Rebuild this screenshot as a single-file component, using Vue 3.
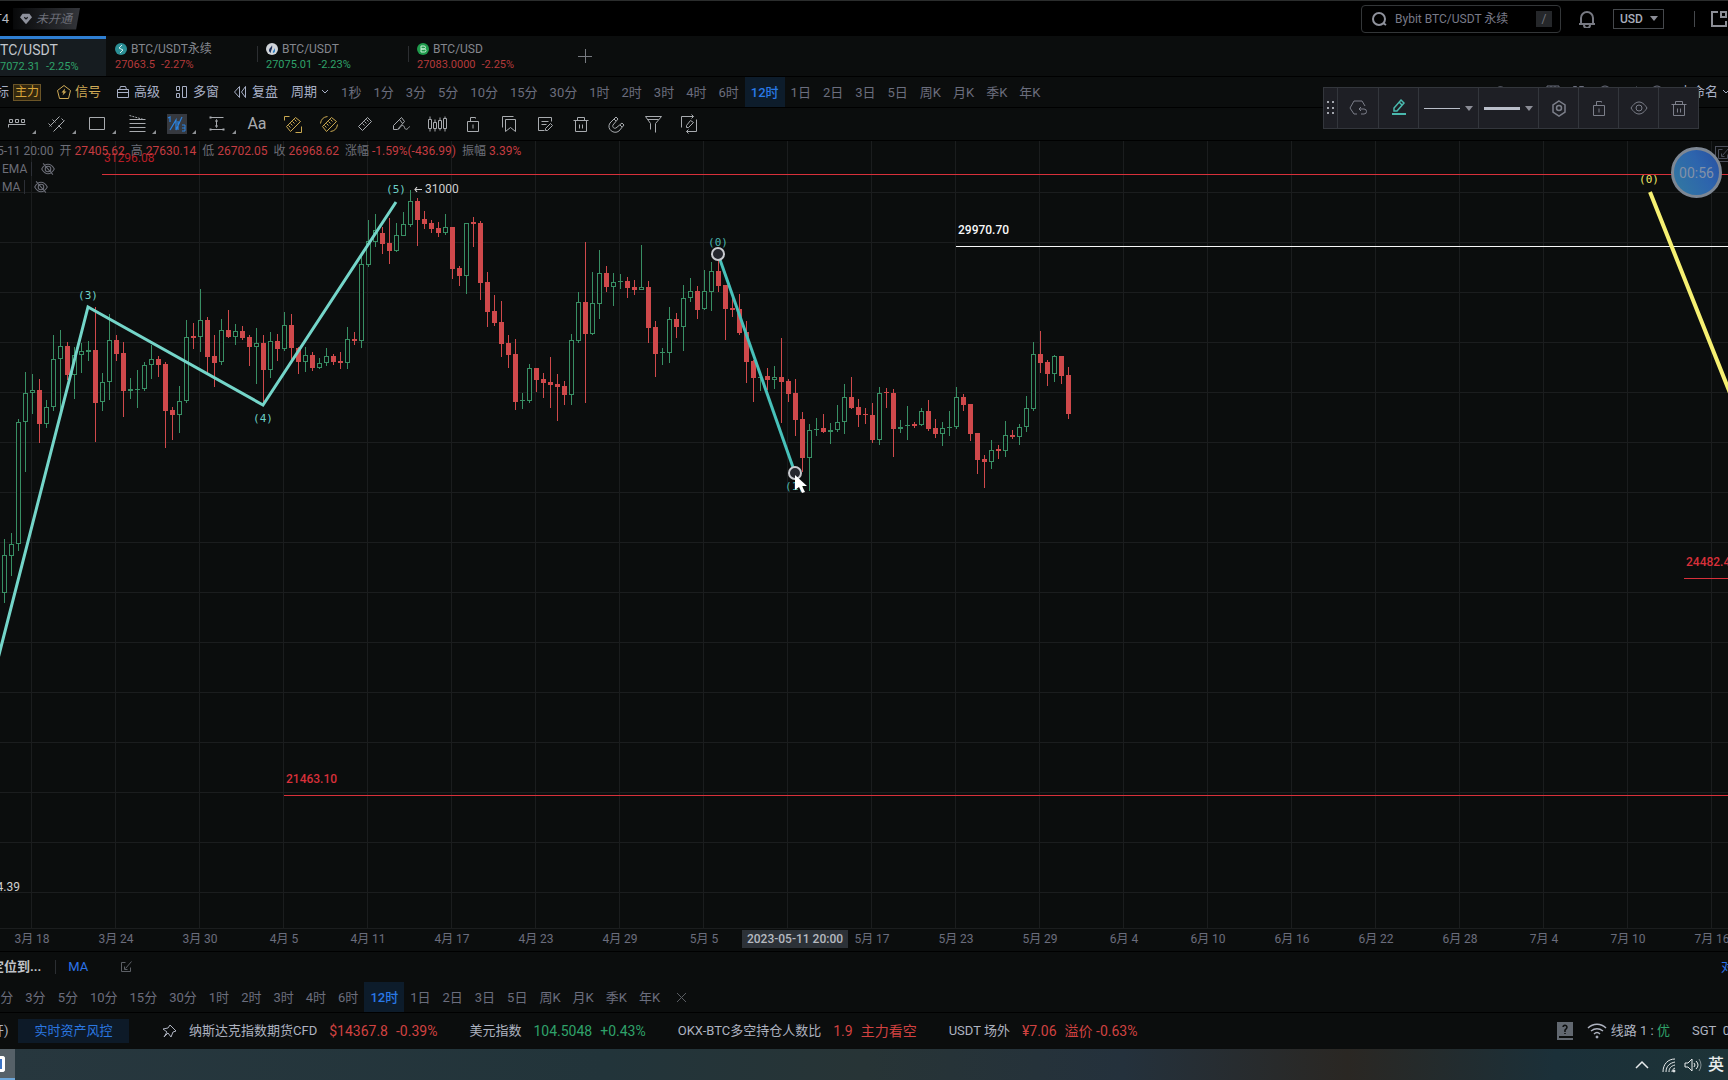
<script setup>
import { ref } from 'vue'

const intervals = ['1分', '3分', '5分', '10分', '15分', '30分', '1时', '2时', '3时', '4时', '6时', '12时', '1日', '2日', '3日', '5日', '周K', '月K', '季K', '年K']
const active = ref('12时')
const search = ref('')
const currency = ref('USD')

const tabs = [
  { icon: 'bybit', name: 'BTC/USDT永续', price: '27063.5', change: '-2.27%', dir: 'down' },
  { icon: 'htx', name: 'BTC/USDT', price: '27075.01', change: '-2.23%', dir: 'up' },
  { icon: 'bitstamp', name: 'BTC/USD', price: '27083.0000', change: '-2.25%', dir: 'down' },
]

const menu = [
  { icon: 'signal', text: '信号', gold: true },
  { icon: 'advanced', text: '高级' },
  { icon: 'windows', text: '多窗' },
  { icon: 'replay', text: '复盘' },
]

const shapeTools = ['range', 'lines', 'rect', 'fib', 'wave', 'measure']
const editTools = ['text', 'ruler-plus', 'ruler-minus', 'ruler', 'pen', 'candles', 'lock', 'bookmark', 'note', 'trash', 'magnet', 'filter', 'sync']

const ohlc = [
  ['开', '27405.62'],
  ['高', '27630.14'],
  ['低', '26702.05'],
  ['收', '26968.62'],
  ['涨幅', '-1.59%(-436.99)'],
  ['振幅', '3.39%'],
]

const dates = ['3月 18', '3月 24', '3月 30', '4月 5', '4月 11', '4月 17', '4月 23', '4月 29', '5月 5', '', '5月 17', '5月 23', '5月 29', '6月 4', '6月 10', '6月 16', '6月 22', '6月 28', '7月 4', '7月 10', '7月 16']

const quotes = [
  { label: '纳斯达克指数期货CFD', values: ['$14367.8', '-0.39%'], dir: 'down' },
  { label: '美元指数', values: ['104.5048', '+0.43%'], dir: 'up' },
  { label: 'OKX-BTC多空持仓人数比', values: ['1.9', '主力看空'], dir: 'down' },
  { label: 'USDT 场外', values: ['¥7.06', '溢价 -0.63%'], dir: 'down' },
]

const columns = Array.from({ length: 32 }, (_, i) => 31 + 84 * i)
const rows = Array.from({ length: 15 }, (_, i) => 192 + 50 * i)

// one entry per 12-hour bar: direction, high, body top, body bottom, low
const bars = `
g 539 555 593 603|g 533 544 556 576|g 419 422 544 551|g 372 393 422 472|g 374 390 393 414|r 379 390 424 443
g 400 407 424 428|g 335 359 407 411|g 330 346 359 410|r 342 346 375 380|g 347 355 375 399|g 343 351 355 373
g 341 350 352 361|r 307 350 403 442|g 373 382 402 411|g 314 340 382 400|r 335 340 354 361|r 342 353 391 417
g 378 389 391 399|g 370 389 390 408|g 362 365 389 391|g 345 359 365 379|r 356 359 365 377|r 362 364 411 448
r 407 410 415 440|g 386 401 415 433|g 320 337 401 403|r 323 336 338 349|g 289 320 337 352|r 317 320 357 373
r 335 356 363 387|g 319 330 362 365|r 310 330 337 338|g 324 331 337 345|r 326 331 338 340|r 335 337 347 366
g 328 343 347 384|r 335 343 370 405|g 332 341 370 378|r 334 341 349 361|g 312 325 349 351|r 314 325 348 360
r 347 348 362 374|g 347 355 362 372|r 352 355 368 371|g 358 363 368 369|g 348 356 363 366|r 354 356 362 365
r 352 361 363 369|g 327 339 363 369|r 332 339 341 345|g 253 264 341 348|g 220 241 265 267|g 214 230 242 247
r 227 233 244 254|r 218 243 251 264|g 223 235 251 252|g 212 224 236 236|g 190 201 225 227|r 198 201 220 246
r 211 219 224 229|r 220 223 229 233|r 222 228 233 237|g 214 227 233 235|r 227 227 269 279|r 266 268 276 286
g 223 223 276 294|r 217 222 224 247|r 221 223 283 300|r 272 282 312 327|r 295 311 323 326|r 301 322 344 357
r 335 343 355 368|r 339 354 402 410|g 393 400 401 409|g 364 368 401 403|r 368 368 380 392|r 373 379 383 398
r 357 382 385 408|r 374 384 387 421|r 381 386 395 405|g 334 340 395 405|g 292 302 341 343|r 242 302 334 403
g 272 303 334 335|g 250 273 304 319|r 266 273 287 292|g 273 282 287 306|g 274 281 282 289|r 277 281 288 298
r 280 287 290 295|g 245 287 290 290|r 281 287 328 343|r 321 327 354 377|g 348 352 353 365|g 307 319 353 363
r 313 319 327 338|g 285 298 327 351|g 278 291 298 302|r 286 291 310 319|g 270 291 309 310|g 262 271 292 311
r 260 271 286 292|r 285 285 309 340|r 298 308 310 317|r 294 309 333 335|r 321 332 362 383|r 360 361 378 402
g 373 377 378 391|r 368 376 380 390|g 366 377 380 389|r 338 377 382 423|r 379 381 394 402|r 379 393 420 436
r 412 419 458 472|g 424 430 458 491|g 418 429 430 436|r 414 428 432 433|g 423 430 432 444|g 405 422 430 432
g 384 397 422 434|r 377 397 408 409|r 399 407 415 427|r 408 414 415 424|r 403 415 440 443|g 387 393 440 445
r 388 392 393 408|r 389 393 429 457|g 420 427 429 433|g 406 425 426 440|r 422 424 426 428|g 408 411 425 426
r 400 411 429 431|r 419 428 434 438|g 422 428 434 446|g 411 427 428 436|g 387 397 427 429|r 394 397 405 411
r 404 404 434 441|r 433 433 460 474|r 455 459 462 488|g 440 450 462 469|r 445 449 451 459|g 421 435 451 457
r 430 435 437 439|g 424 427 437 445|g 396 408 427 432|g 342 354 409 411|r 331 354 363 373|r 360 362 374 386
g 355 356 374 382|r 356 356 376 384|r 367 375 414 419`

const candles = bars.trim().split(/[|\n]/).map((bar, i) => {
  const [side, ...levels] = bar.split(' ')
  const [high, top, bottom, low] = levels.map(Number)
  return { x: 2 + 7 * i, up: side === 'g', high, top, low, height: Math.max(1, bottom - top) }
})
</script>

<template>
  <svg class="sprite" aria-hidden="true">
    <symbol id="gem" viewBox="0 0 14 14"><path d="M3 1h8l3 4-7 8-7-8z" fill="currentColor"/><path d="M5 5l2 2 2-2" fill="none" stroke="#15171a" stroke-width="1.4"/></symbol>
    <symbol id="search" viewBox="0 0 16 16"><circle cx="8" cy="8" r="6"/><path d="M12 12l3 2"/></symbol>
    <symbol id="bell" viewBox="0 0 18 18"><path d="M1 14h16M3 14V8a6 6 0 0 1 12 0v6M6 15a3 3 0 0 0 6 0"/></symbol>
    <symbol id="layout" viewBox="0 0 18 18"><path d="M8 2H2v14h14v-5M11 2h5v5h-5z"/></symbol>
    <symbol id="bybit" viewBox="0 0 12 12"><circle cx="6" cy="6" r="6" fill="#2b8f95" stroke="none"/><path d="M7 2L4 5l4 2-3 3" stroke="#d5eeee"/></symbol>
    <symbol id="htx" viewBox="0 0 12 12"><circle cx="6" cy="6" r="6" fill="#cfd3d8" stroke="none"/><path d="M6 2c0 2-3 3-3 5.500 0 1 1 2 2 2.500C4 8 7 6 6 2z" fill="#1d2c55" stroke="none"/><path d="M8 5c1 2-2 3-1 5 2 0 3-3 1-5z" fill="#2b7fc4" stroke="none"/></symbol>
    <symbol id="bitstamp" viewBox="0 0 12 12"><circle cx="6" cy="6" r="6" fill="#1f9a4c" stroke="none"/><path d="M4 3h3a1 1 0 0 1 0 3H4zM4 6h3.500a1 1 0 0 1 0 3H4z" stroke="#c9f0d6"/></symbol>
    <symbol id="signal" viewBox="-.5 -.5 14 14"><path d="M6.500 0L13 5l-2 8H2L0 5z"/><path d="M7.500 3L4 7h2l-1 3 4-4H7z" fill="currentColor" stroke="none"/></symbol>
    <symbol id="advanced" viewBox="-.5 -.5 14 14"><path d="M3 4l1-3h5l1 3M1 4h11v8H1zM1 7h11"/></symbol>
    <symbol id="windows" viewBox="-.5 -.5 14 14"><path d="M1 1h3v4H1zM1 8h3v4H1zM7 1h4v11H7z"/></symbol>
    <symbol id="replay" viewBox="-.5 -.5 14 14"><path d="M5 1v11L0 6.500zM11 1v11L7 6.500z"/></symbol>
    <symbol id="chevron" viewBox="0 0 8 8"><path d="M1 2l3 3 3-3"/></symbol>
    <symbol id="range" viewBox="-.5 -.5 20 20"><path d="M1 13v-3h17M2 5h3v3H2zM8 5h3v3H8zM14 5h3v3h-3zM1 10v2"/></symbol>
    <symbol id="lines" viewBox="-.5 -.5 20 20"><path d="M2 12L12 2M6 17L17 6M5 5l3 3M11 11l3 3M1 9l3 3M14 4l2 2"/></symbol>
    <symbol id="rect" viewBox="-.5 -.5 20 20"><path d="M2 3h15v12H2z"/></symbol>
    <symbol id="fib" viewBox="-.5 -.5 20 20"><path d="M2 5h16M2 9h16M2 13h16M2 17h16"/><path d="M2 1l14 4" stroke-dasharray="2 1"/></symbol>
    <symbol id="wave" viewBox="0 0 20 20"><path d="M1 4l2-1v5M3 16L9 6v10l6-13M11 7v9" stroke-width="1.200"/><path d="M15 11h3v6h-3M15 14h3"/></symbol>
    <symbol id="measure" viewBox="-.5 -.5 20 20"><path d="M3 3h13M3 15h13M9 6v6M8 7l1-2 1 2M8 11l1 2 1-2"/><path d="M2 2h2v2H2zM2 14h2v2H2zM15 14h2v2h-2z" fill="currentColor" stroke="none"/></symbol>
    <symbol id="ruler-plus" viewBox="-.5 -.5 20 20"><path d="M12 3l5 4L7 17l-4-5zM9 7l2 2M7 9l2 2M11 5l2 2M5 11l2 2M1 6V2h5M18 12v6h-6"/></symbol>
    <symbol id="ruler-minus" viewBox="-.5 -.5 20 20"><path d="M12 3l5 4L7 17l-4-5zM9 7l2 2M7 9l2 2M11 5l2 2M5 11l2 2M1 9a8 8 0 0 1 7-7M18 10a8 8 0 0 1-7 7"/></symbol>
    <symbol id="ruler" viewBox="-.5 -.5 20 20"><path d="M12 3l4 4L7 16l-4-4zM9 7l2 2M7 9l2 2M11 5l2 2"/></symbol>
    <symbol id="pen" viewBox="-.5 -.5 20 20"><path d="M10 3l3 4-7 8H2v-4zM8 5l3 4M7 15c3-5 5-5 6-2s3 2 5-1"/></symbol>
    <symbol id="candles" viewBox="-.5 -.5 20 20"><path d="M1 5h3v9H1zM2.500 2v3M2.500 14v3M6 8h3v6H6zM7.500 5v3M7.500 14v3M11 6h3v8h-3zM12.500 3v3M12.500 14v2M16 4h3v10h-3zM17.500 2v2M17.500 14v3"/></symbol>
    <symbol id="lock" viewBox="-.5 -.5 20 20"><path d="M4 7h11v10H4zM7 7V3h5v1M9.500 10v4"/></symbol>
    <symbol id="bookmark" viewBox="-.5 -.5 20 20"><path d="M6 5h10v12l-5-4-5 4zM3 13V2h11"/></symbol>
    <symbol id="note" viewBox="-.5 -.5 20 20"><path d="M16 7V3H3v13h6M6 7h7M6 10h5M15 9l2 2-5 5h-2v-2z"/></symbol>
    <symbol id="trash" viewBox="-.5 -.5 20 20"><path d="M2 6h15M4 6v11h11V6M6 6V3h7v3M8 10v4M11 10v4"/></symbol>
    <symbol id="magnet" viewBox="0 0 20 20"><path d="M9 3l2 2-5 6c-1 2 1 4 3 3l6-5 2 2-5 6c-5 4-13-2-9-8zM7 5l2 2M13 11l2 2"/></symbol>
    <symbol id="filter" viewBox="-.5 -.5 20 20"><path d="M7 15v-6L2 2h16l-6 7v9M4 5h11"/></symbol>
    <symbol id="sync" viewBox="-.5 -.5 20 20"><path d="M2 13V2h12M12 0l2 2-2 2M17 5v12H7M9 15l-2 2 2 2M11 6l3 2-5 5H7v-2z"/></symbol>
    <symbol id="revert" viewBox="0 0 20 20"><path d="M9 16H6l-4-6 4-7h8l3 5M11 11h5a2 2 0 0 1 0 5h-3M13 9l-2 2 2 2"/></symbol>
    <symbol id="pencil" viewBox="0 0 20 20"><path d="M12 2l3 3-7 8H5v-3zM10 4l3 3" stroke-width="1.500"/><path d="M3 16h14" stroke-width="2"/></symbol>
    <symbol id="hex" viewBox="0 0 20 20"><path d="M10 3l6 4v7l-6 4-6-4V7z" stroke-width="1.500"/><circle cx="10" cy="10" r="2.500" stroke-width="1.500"/></symbol>
    <symbol id="eye" viewBox="0 0 20 20"><path d="M2 10c5-8 11-8 16 0-5 8-11 8-16 0z"/><circle cx="10" cy="10" r="3"/></symbol>
    <symbol id="eye-off" viewBox="0 0 20 20"><path d="M1 10c5-9 13-9 18 0-5 9-13 9-18 0zM3 2l14 16" stroke-width="1.500"/><circle cx="10" cy="10" r="4" stroke-width="1.500"/></symbol>
    <symbol id="edit" viewBox="-.5 -.5 14 14"><path d="M6 2H2v9h9V7M6 8l6-7M5 6v3h3"/></symbol>
    <symbol id="pin" viewBox="0 0 16 16"><path d="M8 2l6 6-3 1-2 5-3-4-4 4 3-5-4-3 5-1z"/></symbol>
    <symbol id="book" viewBox="0 0 18 20"><path d="M1 1h16v18H1z" fill="#626870" stroke="none"/><path d="M3 16h14" stroke="#0b0d0d" stroke-width="2"/><path d="M7 6a2 2 0 1 1 3 2L9 9v2M9 12v1" stroke="#0b0d0d" stroke-width="1.500"/></symbol>
    <symbol id="wifi" viewBox="0 0 20 20"><path d="M1 7c5-5 13-5 18 0M4 10c4-3 8-3 12 0M7 13c2-2 4-2 6 0" stroke-width="1.500"/><circle cx="10" cy="16" r="1" fill="currentColor"/></symbol>
    <symbol id="arrow" viewBox="0 0 10 10"><path d="M9 5.500H2M4 3L2 5.500 4 8" stroke-width="1.200"/></symbol>
    <symbol id="net" viewBox="0 0 16 16"><path d="M2 15C2 7 7 2 14 2M5 15c0-6 4-9 9-10M8 15c0-4 2-6 6-7M11 15c0-2 1-3 3-4"/><circle cx="13" cy="14" r="1" fill="currentColor"/></symbol>
    <symbol id="speaker" viewBox="0 0 18 16"><path d="M1 6h3l4-4v12l-4-4H1zM10 6q2 2 0 4M12 4q4 4 0 8"/><path d="M15 2q4 6 0 12" opacity=".5"/></symbol>
    <symbol id="up" viewBox="0 0 14 10"><path d="M1 8l6-6 6 6" stroke-width="1.500"/></symbol>
    <symbol id="undo" viewBox="0 0 14 14"><path d="M3 3c4-3 9 0 9 4s-4 6-8 5"/></symbol>
    <symbol id="grid" viewBox="0 0 14 14"><path d="M1 1h12v12H1zM1 5h12M5 1v12M9 1v12"/></symbol>
    <symbol id="gear" viewBox="0 0 14 14"><circle cx="7" cy="7" r="6"/><circle cx="7" cy="7" r="2"/></symbol>
  </svg>

  <main class="app">
    <header class="top">
      <span class="plan">T4</span>
      <a class="member" href="#"><svg class="i12"><use href="#gem"/></svg><em>未开通</em></a>
      <label class="search">
        <svg class="i16"><use href="#search"/></svg>
        <input v-model="search" type="text" placeholder="Bybit BTC/USDT 永续" aria-label="搜索">
        <kbd>/</kbd>
      </label>
      <button class="bell" aria-label="通知"><svg class="i18"><use href="#bell"/></svg></button>
      <div class="currency">
        <select v-model="currency" aria-label="货币"><option>USD</option><option>CNY</option></select>
        <i class="caret"></i>
      </div>
      <i class="split"></i>
      <button class="layout" aria-label="布局"><svg class="i18"><use href="#layout"/></svg></button>
    </header>

    <nav class="tabs">
      <a class="tab current" href="#">
        <span class="name">TC/USDT</span>
        <span class="price up"><span>7072.31</span><span>-2.25%</span></span>
      </a>
      <a v-for="tab in tabs" :key="tab.icon" class="tab" href="#">
        <span class="name"><svg class="i12"><use :href="'#' + tab.icon"/></svg>{{ tab.name }}</span>
        <span class="price" :class="tab.dir"><span>{{ tab.price }}</span><span>{{ tab.change }}</span></span>
      </a>
      <button class="add" aria-label="添加"></button>
    </nav>

    <div class="bar menu">
      <span class="cut">标</span>
      <button class="main-force">主力</button>
      <button v-for="item in menu" :key="item.icon" class="item" :class="{ gold: item.gold }">
        <svg class="i14"><use :href="'#' + item.icon"/></svg>{{ item.text }}
      </button>
      <button class="item period">周期<svg class="i8"><use href="#chevron"/></svg></button>
      <div class="intervals">
        <button>1秒</button>
        <button v-for="t in intervals" :key="t" :class="{ on: t === active }" @click="active = t">{{ t }}</button>
      </div>
      <div class="extras">
        <button v-for="t in ['undo', 'chevron', 'grid', 'windows', 'gear', 'edit', 'gear']" :key="t" :aria-label="t"><svg class="i14"><use :href="'#' + t"/></svg></button>
      </div>
      <button class="template">未命名<svg class="i8"><use href="#chevron"/></svg></button>
    </div>

    <div class="bar tools">
      <button v-for="t in shapeTools" :key="t" class="tool wide" :class="{ on: t === 'wave' }" :aria-label="t">
        <span><svg class="i20"><use :href="'#' + t"/></svg></span>
      </button>
      <button v-for="t in editTools" :key="t" class="tool" :class="{ gold: t.startsWith('ruler-') }" :aria-label="t">
        <b v-if="t === 'text'">Aa</b>
        <svg v-else class="i20"><use :href="'#' + t"/></svg>
      </button>
    </div>

    <section class="chart">
      <svg class="plot">
        <g transform="translate(0 -141)">
          <g class="grid">
            <rect v-for="x in columns" :key="'c' + x" :x="x" y="141" width="1" height="100%"/>
            <rect v-for="y in rows" :key="'r' + y" x="0" :y="y" width="100%" height="1"/>
          </g>
          <g class="candles">
            <g v-for="c in candles" :key="c.x" :class="c.up ? 'bull' : 'bear'">
              <rect :x="c.x + 2" :y="c.high" width="1" :height="c.low - c.high"/>
              <rect :x="c.x" :y="c.top" width="5" :height="c.height"/>
              <rect v-if="c.up && c.height > 2" class="hollow" :x="c.x + 1" :y="c.top + 1" width="3" :height="c.height - 2"/>
            </g>
          </g>
          <g class="levels">
            <rect x="102" y="174" width="100%" height="1"/>
            <rect x="284" y="795" width="100%" height="1"/>
            <rect x="1684" y="578" width="100%" height="1"/>
            <rect class="white" x="956" y="246" width="100%" height="1"/>
            <text class="dark" x="104" y="162">31296.08</text>
            <text x="286" y="783">21463.10</text>
            <text x="1686" y="566">24482.40</text>
            <text class="white" x="958" y="234">29970.70</text>
          </g>
          <g class="marks">
            <svg x="413" y="184" width="10" height="10"><use href="#arrow"/></svg>
            <text x="425" y="193">31000</text>
            <text x="20" y="891" text-anchor="end">4.39</text>
          </g>
          <g class="waves">
            <polyline points="-10,690 88,307 263,405 396,202"/>
            <polyline class="picked" points="718,254 795,473"/>
            <polyline class="yellow" points="1650,192 1728,388 1800,569"/>
            <text x="88" y="299">(3)</text>
            <text x="263" y="422">(4)</text>
            <text x="396" y="193">(5)</text>
            <text class="picked" x="718" y="246">(0)</text>
            <text class="picked" x="795" y="490">(1)</text>
            <text class="yellow" x="1649" y="183">(0)</text>
            <circle cx="718" cy="254" r="6"/>
            <circle cx="795" cy="473" r="6"/>
          </g>
          <path class="cursor" d="M795 475v15l4-3 3 6 3-1-3-6h5z"/>
        </g>
      </svg>
      <div class="legend">
        <p class="ohlc">
          <span>5-11 20:00</span>
          <span v-for="[label, value] in ohlc" :key="label">{{ label }}<b>{{ value }}</b></span>
        </p>
        <p class="study"><span>EMA</span><button aria-label="显示 EMA"><svg class="i14"><use href="#eye-off"/></svg></button></p>
        <p class="study"><span>MA</span><button aria-label="显示 MA"><svg class="i14"><use href="#eye-off"/></svg></button></p>
      </div>
      <button class="expand" aria-label="全屏"><svg class="i14"><use href="#edit"/></svg></button>
      <div class="timer">00:56</div>
    </section>

    <div class="axis">
      <span v-for="(d, i) in dates" :key="i">{{ d }}</span>
      <strong>2023-05-11 20:00</strong>
    </div>

    <div class="studies">
      <button class="locate">定位到...</button>
      <a href="#">MA</a>
      <button class="edit" aria-label="编辑"><svg class="i14"><use href="#edit"/></svg></button>
      <a class="log" href="#">对数</a>
    </div>

    <div class="bar lower">
      <div class="intervals">
        <button v-for="t in intervals" :key="t" :class="{ on: t === active }" @click="active = t">{{ t }}</button>
      </div>
      <button class="close" aria-label="关闭"></button>
    </div>

    <footer class="status">
      <span class="toggle">开)</span>
      <button class="risk">实时资产风控</button>
      <svg class="i16 pin"><use href="#pin"/></svg>
      <div v-for="q in quotes" :key="q.label" class="quote">
        <span>{{ q.label }}</span>
        <span v-for="v in q.values" :key="v" class="value" :class="q.dir">{{ v }}</span>
      </div>
      <svg class="book"><use href="#book"/></svg>
      <svg class="i20"><use href="#wifi"/></svg>
      <span class="route">线路 1 : <span class="up">优</span></span>
      <span class="zone">SGT&nbsp; 02:19</span>
    </footer>

    <div class="taskbar">
      <button class="task" aria-label="浏览器"><i></i></button>
      <svg class="tray-up"><use href="#up"/></svg>
      <svg class="i16"><use href="#net"/></svg>
      <svg class="i18"><use href="#speaker"/></svg>
      <span>英</span>
    </div>

    <div class="floating" role="toolbar" aria-label="画线工具">
      <svg class="grip" viewBox="0 0 8 14"><path d="M0 1h2M5 1h2M0 7h2M5 7h2M0 12h2M5 12h2"/></svg>
      <button aria-label="还原"><svg class="i20"><use href="#revert"/></svg></button>
      <button class="teal" aria-label="颜色"><svg class="i20"><use href="#pencil"/></svg></button>
      <button class="stroke" aria-label="线型"><i class="thin"></i><i class="caret"></i></button>
      <button class="stroke" aria-label="线宽"><i class="thick"></i><i class="caret"></i></button>
      <button aria-label="设置"><svg class="i20"><use href="#hex"/></svg></button>
      <button aria-label="锁定"><svg class="i20"><use href="#lock"/></svg></button>
      <button aria-label="隐藏"><svg class="i20"><use href="#eye"/></svg></button>
      <button aria-label="删除"><svg class="i20"><use href="#trash"/></svg></button>
    </div>
  </main>
</template>

<style>
body {
  margin: 0;
  background: #0b0d0d;
}
</style>

<style scoped>
.sprite { position: absolute; width: 0; height: 0; }
.app {
  position: relative;
  display: flex;
  flex-direction: column;
  min-height: 100vh;
  overflow: hidden;
  background: #0b0d0d;
  color: #a9aebd;
  font: 13px/16px Roboto, "Noto Sans CJK SC", sans-serif;
  white-space: nowrap;
}
button, input, select {
  margin: 0;
  padding: 0;
  border: 0;
  background: none;
  color: inherit;
  font: inherit;
}
a { color: inherit; text-decoration: none; }
p { margin: 0; }
svg { flex: none; fill: none; stroke: currentColor; }
.i8 { width: 8px; height: 8px; }
.i12 { width: 12px; height: 12px; }
.i14 { width: 14px; height: 14px; }
.i16 { width: 16px; height: 16px; }
.i18 { width: 18px; height: 18px; }
.i20 { width: 20px; height: 20px; }
.up { color: #2fa26a; }
.down { color: #d14241; }
.gold { color: #d0ab57; }
.caret {
  border: 4px solid transparent;
  border-top: 5px solid #8b8d96;
  border-bottom: 0;
}

.top {
  display: flex;
  align-items: center;
  box-sizing: border-box;
  height: 36px;
  border-top: 1px solid #2b2d2d;
  background: #000;
}
.plan { margin: 0 4px 0 -6px; color: #b5b8c0; }
.member {
  display: flex;
  align-items: center;
  gap: 4px;
  height: 22px;
  padding: 0 8px 0 7px;
  background: linear-gradient(90deg, #08090a, #33353a);
  clip-path: polygon(0 0, 100% 0, calc(100% - 4px) 100%, 0 100%);
  color: #6d6f79;
  font-size: 12px;
}
.member svg { stroke: none; color: #8d909b; }
.search {
  display: flex;
  align-items: center;
  gap: 8px;
  box-sizing: border-box;
  width: 200px;
  height: 28px;
  margin-left: auto;
  padding: 0 8px 0 9px;
  border: 1px solid #333638;
  border-radius: 4px;
}
.search svg { color: #8f929c; stroke-width: 2; }
.search input { flex: 1; min-width: 0; outline: 0; font-size: 12px; }
.search input::placeholder { color: #787a88; opacity: 1; }
kbd {
  width: 16px;
  height: 16px;
  background: #25272a;
  color: #70737c;
  font: 12px/16px Roboto, sans-serif;
  text-align: center;
}
.bell { height: 18px; margin-left: 17px; color: #777982; }
.bell svg, .layout svg { stroke-width: 2; }
.currency {
  display: flex;
  align-items: center;
  gap: 5px;
  box-sizing: border-box;
  height: 20px;
  margin-left: 17px;
  padding: 0 5px 0 6px;
  border: 1px solid #45484c;
  color: #a7acba;
  font-size: 12px;
  font-weight: 500;
}
select { width: 25px; appearance: none; }
.split { width: 1px; height: 16px; margin-left: 30px; background: #45484c; }
.layout { height: 18px; margin: 0 0 0 15px; color: #8c8e96; }

.tabs {
  display: flex;
  box-sizing: border-box;
  height: 41px;
  border-bottom: 1px solid #000;
}
.tab {
  position: relative;
  display: flex;
  flex-direction: column;
  box-sizing: border-box;
  width: 151px;
  padding: 5px 0 0 9px;
  color: #84868d;
  font-size: 12px;
}
.tab + .tab + .tab::before {
  content: "";
  position: absolute;
  left: 0;
  top: 10px;
  height: 16px;
  border-left: 1px solid #2c2e31;
}
.tab svg { stroke-width: 1; }
.name { display: flex; align-items: center; gap: 4px; height: 16px; }
.price { display: flex; gap: 6px; font-size: 11px; }
.tab .down { color: #b53a3b; }
.current {
  width: 106px;
  padding: 2px 0 0;
  border-top: 3px solid #2f7fd2;
  background: #161c20;
  color: #c3c7cc;
}
.current .name { height: 18px; font-size: 14px; }
.add {
  width: 14px;
  height: 14px;
  margin: 13px 0 0 19px;
  background:
    linear-gradient(#777a80, #777a80) center / 14px 1px no-repeat,
    linear-gradient(#777a80, #777a80) center / 1px 14px no-repeat;
}

.bar { display: flex; align-items: center; box-sizing: border-box; border-bottom: 1px solid #000; }
.menu { position: relative; gap: 15px; height: 31px; color: #a8b0c6; }
.cut { margin: 0 -11px 0 -4px; }
.main-force {
  height: 17px;
  border: 1px solid #6b5527;
  background: #33280f;
  color: #d9a53a;
  font-size: 12px;
  line-height: 15px;
  padding: 0 1px;
}
.item { display: flex; align-items: center; gap: 4px; }
.main-force + .item { margin-left: 1px; }
.period { margin: 0 -9px 0 -2px; }
.intervals { display: flex; align-self: stretch; color: #6b6e7e; }
.intervals button { padding: 1px 6px 0; }
.intervals .on { background: #0d1c2b; color: #2979e6; font-weight: 500; }
.extras { display: flex; gap: 12px; height: 14px; margin-left: auto; color: #6b6e7e; }
.template { display: flex; align-items: center; gap: 4px; margin-right: -2px; }

.tools { height: 33px; color: #a8abaf; padding-left: 0; }
.tool { display: flex; align-items: center; justify-content: center; width: 36px; height: 20px; }
.tool b { font-size: 16px; font-weight: 400; }
.tool:first-child { margin-left: -3px; }
.tool.wide + .tool:not(.wide) { margin-left: 2px; }
.wide { position: relative; width: 40px; }
.wide::after {
  content: "";
  position: absolute;
  right: 1px;
  bottom: 0;
  border: 2px solid #8d9093;
  border-top-color: transparent;
  border-left-color: transparent;
}
.wide span { display: flex; }
.tool.on span { background: #36393f; color: #2b83e0; }
.tools .gold { color: #c9a850; }

.chart { position: relative; flex: 1 0 400px; }
.plot { position: absolute; inset: 0; width: 100%; height: 100%; stroke: none; }
.grid { fill: #1b1d1e; }
.bull { fill: #388f64; }
.bear { fill: #cf494b; }
.hollow { fill: #0b0d0d; }
.levels { fill: #d8303a; font-size: 12px; }
.levels .dark { fill: #b81d26; }
.levels .white { fill: #f8f8f8; }
.levels text:not(.dark) { font-weight: 500; }
.marks { fill: #d0d0d0; font-size: 12px; }
.marks svg { stroke: #d0d0d0; fill: none; }
.waves {
  fill: #6cd0c6;
  font: 11px "DejaVu Sans Mono", monospace;
  text-anchor: middle;
}
.waves polyline { fill: none; stroke: #74d5c9; stroke-width: 3; }
.waves polyline.picked { stroke: #48c1ba; }
.waves polyline.yellow { stroke: #f6f072; stroke-width: 4; }
.waves text.picked { fill: #49b3ab; }
.waves text.yellow { fill: #efe968; }
.waves circle { fill: #25262d; stroke: #c9cacf; stroke-width: 2; }
.cursor { fill: #fff; }

.legend { position: relative; width: max-content; padding-top: 1px; color: #6c6e78; font-size: 12px; line-height: 18px; }
.ohlc { display: flex; gap: 6px; margin-left: -3px; }
.ohlc b { margin-left: 3px; color: #c43c41; font-weight: 400; }
.study { display: flex; align-items: center; height: 18px; margin-left: 2px; }
.study span { padding-right: 4px; border-right: 1px solid #2c2f36; line-height: 14px; }
.study button { height: 14px; margin-left: 9px; }
.expand { position: absolute; right: -3px; top: 5px; width: 16px; height: 16px; border: 1px solid #4b4e5a; color: #4b4e5a; line-height: 0; }
.timer {
  position: absolute;
  right: 6px;
  top: 6px;
  box-sizing: border-box;
  width: 51px;
  height: 51px;
  border: 3px solid #7d8794;
  border-radius: 50%;
  background: linear-gradient(60deg, #327aa0, #2d64ad 60%, #2850a0);
  color: #8291a8;
  font-size: 14px;
  line-height: 46px;
  text-align: center;
}

.axis {
  position: relative;
  display: flex;
  box-sizing: border-box;
  height: 24px;
  padding-top: 2px;
  border-top: 1px solid #1b1d1e;
  border-bottom: 1px solid #000;
  color: #6b6e7e;
  font-size: 12px;
}
.axis span { flex: none; width: 84px; text-align: center; }
.axis span:first-child { margin-left: -10px; }
.axis strong {
  position: absolute;
  left: 742px;
  top: 1px;
  width: 106px;
  background: #2c3137;
  color: #b6bac0;
  font-weight: 500;
  line-height: 18px;
  text-align: center;
}

.studies { display: flex; align-items: center; height: 30px; }
.locate { margin-left: -9px; color: #c0c3c8; font-weight: 700; }
.studies a { color: #2b73e8; }
.locate + a { margin-left: 14px; padding-left: 12px; border-left: 1px solid #2b2e32; line-height: 14px; }
.edit { height: 14px; margin-left: 31px; color: #5d6066; }
.studies .log { margin: 0 -19px 0 auto; }
.lower { height: 31px; }
.lower .intervals { margin-left: -13px; }
.close {
  width: 9px;
  height: 9px;
  margin-left: 11px;
  background:
    linear-gradient(45deg, transparent 46%, #5a5d62 46% 54%, transparent 54%),
    linear-gradient(-45deg, transparent 46%, #5a5d62 46% 54%, transparent 54%);
}

.status { display: flex; align-items: center; height: 36px; color: #aeb3c0; }
.toggle { width: 18px; margin-left: -9px; }
.risk { width: 111px; height: 24px; margin-left: 9px; background: #0d1a28; color: #2b78e0; }
.pin { margin: 0 11px 0 33px; }
.quote { display: flex; margin-right: 32px; }
.value { margin-left: 8px; font-size: 14px; }
.quote span:nth-child(2) { margin-left: 12px; }
.book { width: 18px; height: 20px; margin: 0 13px 0 auto; }
.route { margin-left: 4px; }
.zone { width: 36px; margin-left: 22px; overflow: hidden; }

.taskbar {
  display: flex;
  align-items: center;
  gap: 7px;
  height: 31px;
  background: linear-gradient(90deg, #27373e, #22343a 35%, #273436 50%, #24313c 65%, #2a2723 78%, #1b3039 90%, #1d3337);
  color: #e8ebec;
  font-size: 16px;
}
.task {
  display: flex;
  align-items: center;
  align-self: stretch;
  width: 15px;
  margin-right: auto;
  border-bottom: 2px solid #6da6d8;
  background: #566168;
}
.task i {
  box-sizing: border-box;
  width: 5px;
  height: 16px;
  border: 3px solid #fff;
  border-left: 0;
  border-radius: 0 3px 3px 0;
  background: #3d74c4;
}
.tray-up { width: 14px; height: 10px; margin-right: 5px; }
.taskbar span { margin: 0 4px 0 -1px; font-weight: 500; }

.floating {
  position: absolute;
  top: 87px;
  right: 29px;
  display: flex;
  box-sizing: border-box;
  height: 42px;
  border: 1px solid #33363c;
  background: #1e1f25;
  color: #7c7f8a;
}
.floating button { display: flex; align-items: center; justify-content: center; box-sizing: border-box; width: 40px; border-left: 1px solid #33363c; }
.floating button:nth-of-type(1) { width: 41px; }
.floating .stroke { gap: 5px; width: 60px; }
.floating .teal { color: #4ab9ae; }
.grip {
  align-self: center;
  width: 8px;
  height: 14px;
  margin: 0 2px 0 3px;
  color: #a3a6ad;
  stroke-width: 2;
}
.thin { width: 36px; height: 1px; background: #b9bec9; }
.thick { width: 36px; height: 3px; background: #b9bec9; }
</style>
